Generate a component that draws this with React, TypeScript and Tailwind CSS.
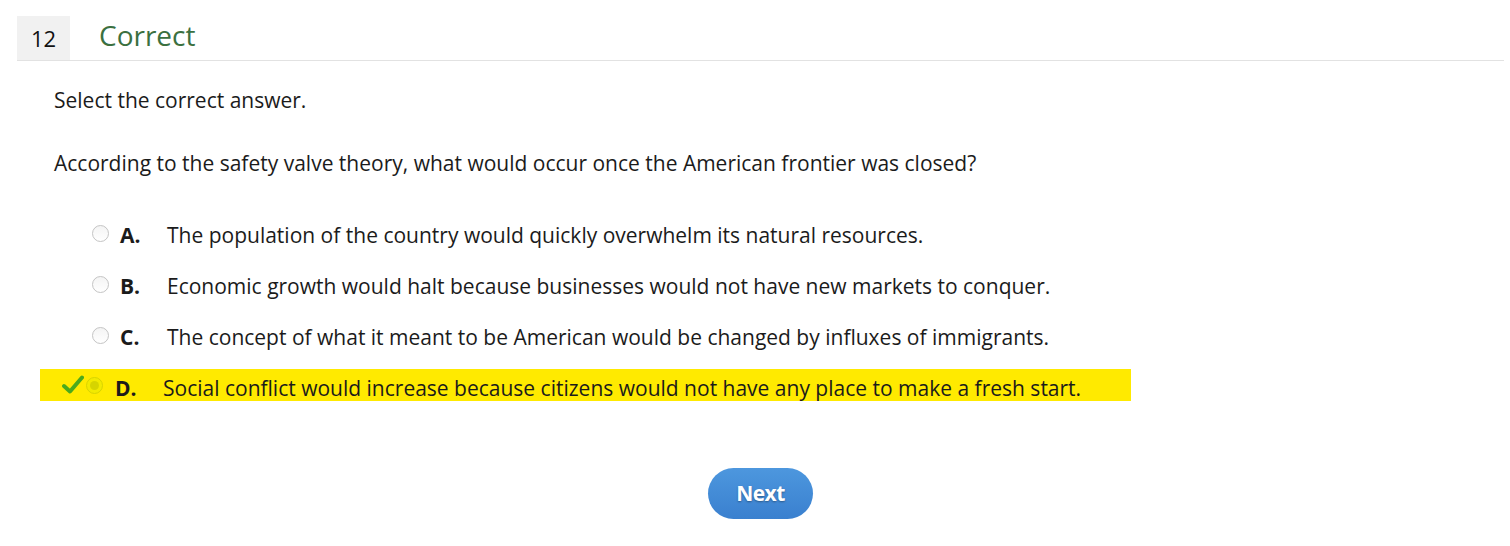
import React from "react";

interface Option {
  letter: string;
  text: string;
  correct?: boolean;
}

const options: Option[] = [
  { letter: "A.", text: "The population of the country would quickly overwhelm its natural resources." },
  { letter: "B.", text: "Economic growth would halt because businesses would not have new markets to conquer." },
  { letter: "C.", text: "The concept of what it meant to be American would be changed by influxes of immigrants." },
  {
    letter: "D.",
    text: "Social conflict would increase because citizens would not have any place to make a fresh start.",
    correct: true,
  },
];

function Radio({ selected }: { selected?: boolean }) {
  if (selected) {
    return (
      <span className="flex h-[17px] w-[17px] shrink-0 items-center justify-center rounded-full border border-[#d8d400] bg-[#f2ea00]">
        <span className="h-[9px] w-[9px] rounded-full bg-[#d6d400]" />
      </span>
    );
  }
  return (
    <span className="mt-[3px] h-[17px] w-[17px] shrink-0 rounded-full border border-[#c4c4c4] bg-gradient-to-b from-[#f4f4f4] to-white" />
  );
}

function OptionRow({ option }: { option: Option }) {
  if (option.correct) {
    return (
      <div className="flex h-[32px] w-[1091px] items-center bg-[#ffea00] pl-[22px]">
        <svg width="22" height="20" viewBox="0 0 22 20" className="shrink-0">
          <path d="M2 11 L8 16.5 L20 2.5" fill="none" stroke="#4aaa1c" strokeWidth="4" strokeLinecap="round" strokeLinejoin="round" />
        </svg>
        <span className="ml-[2px]">
          <Radio selected />
        </span>
        <span className="ml-[12px] w-[48px] pt-[6px] font-bold">{option.letter}</span>
        <span className="pt-[6px]">{option.text}</span>
      </div>
    );
  }
  return (
    <div className="flex h-[32px] items-center pl-[52px]">
      <Radio />
      <span className="ml-[11px] w-[47px] pt-[6px] font-bold">{option.letter}</span>
      <span className="pt-[6px]">{option.text}</span>
    </div>
  );
}

export default function App() {
  return (
    <div
      className="min-h-[546px] bg-white pl-[17px] pr-[6px] pt-[16px] text-[#1b1b1b]"
      style={{ fontFamily: '"Open Sans", "Noto Sans", sans-serif' }}
    >
      <div className="flex items-center border-b border-[#e2e2e2]">
        <div className="flex h-[44px] w-[53px] items-center justify-center bg-[#f1f1f1] text-[22px] text-[#111]">
          12
        </div>
        <h1 className="mb-[7px] ml-[29px] text-[28px] leading-none text-[#3b7040]">Correct</h1>
      </div>

      <div className="pl-[37px] pt-[25px] text-[21px] leading-[28px]">
        <p>Select the correct answer.</p>
        <p className="mt-[35px]">
          According to the safety valve theory, what would occur once the American frontier was closed?
        </p>
      </div>

      <div className="mt-[39px] flex flex-col gap-[19px] pl-[23px] text-[21px] leading-[28px]">
        {options.map((o) => (
          <OptionRow key={o.letter} option={o} />
        ))}
      </div>

      <div className="mt-[67px] flex justify-center">
        <button className="h-[51px] w-[105px] rounded-full bg-gradient-to-b from-[#4d97de] to-[#3a80cf] text-[21px] font-bold tracking-[-0.5px] text-white [text-shadow:0_1px_2px_rgba(0,0,0,0.35)]">
          Next
        </button>
      </div>
    </div>
  );
}
